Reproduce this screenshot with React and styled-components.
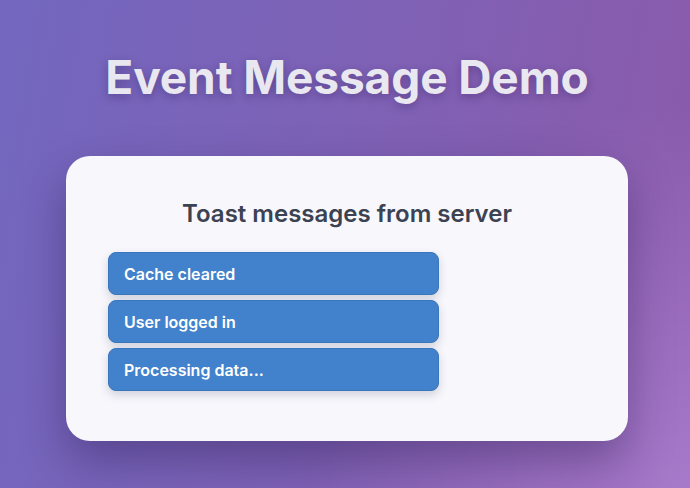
import React from "react";
import styled, { createGlobalStyle } from "styled-components";

const GlobalStyle = createGlobalStyle`
  * { box-sizing: border-box; }
  html, body { margin: 0; padding: 0; }
  body {
    font-family: Inter, "Noto Sans", sans-serif;
    min-height: 488px;
    background:
      radial-gradient(circle at 100% 100%, rgba(170, 125, 205, 0.9) 0%, rgba(170, 125, 205, 0) 45%),
      linear-gradient(100deg, #7367bf 0%, #7d62b6 45%, #8c5aab 100%);
  }
`;

const toasts = ["Cache cleared", "User logged in", "Processing data..."];

const App = () => {
  return (
    <>
      <GlobalStyle />
      <Page>
        <Title>Event Message Demo</Title>
        <Card>
          <Heading>Toast messages from server</Heading>
          <ToastList>
            {toasts.map((t) => (
              <Toast key={t}>{t}</Toast>
            ))}
          </ToastList>
        </Card>
      </Page>
    </>
  );
};

export default App;

const Page = styled.div`
  display: flex;
  flex-direction: column;
  align-items: center;
  padding: 49px 62px 0 66px;
`;

const Title = styled.h1`
  margin: 0;
  font-size: 46px;
  line-height: 57px;
  font-weight: 700;
  color: #e9e7ef;
  letter-spacing: -0.1px;
  text-shadow: 0 3px 8px rgba(40, 20, 80, 0.35);
`;

const Card = styled.div`
  margin-top: 50px;
  width: 562px;
  background: #f8f7fc;
  border-radius: 24px;
  padding: 42px 42px 50px 42px;
  box-shadow: 0 20px 45px rgba(40, 25, 80, 0.4);
`;

const Heading = styled.h2`
  margin: 0 0 23px 0;
  text-align: center;
  font-size: 24px;
  line-height: 31px;
  font-weight: 600;
  color: #3b4252;
`;

const ToastList = styled.div`
  display: flex;
  flex-direction: column;
  gap: 5px;
`;

const Toast = styled.div`
  width: 331px;
  height: 43px;
  display: flex;
  align-items: center;
  padding: 0 15px;
  background: #4281cb;
  border: 1px solid #3b76bd;
  border-radius: 8px;
  color: #ffffff;
  font-size: 16px;
  font-weight: 600;
  box-shadow: 0 4px 10px rgba(30, 40, 80, 0.18);
`;
